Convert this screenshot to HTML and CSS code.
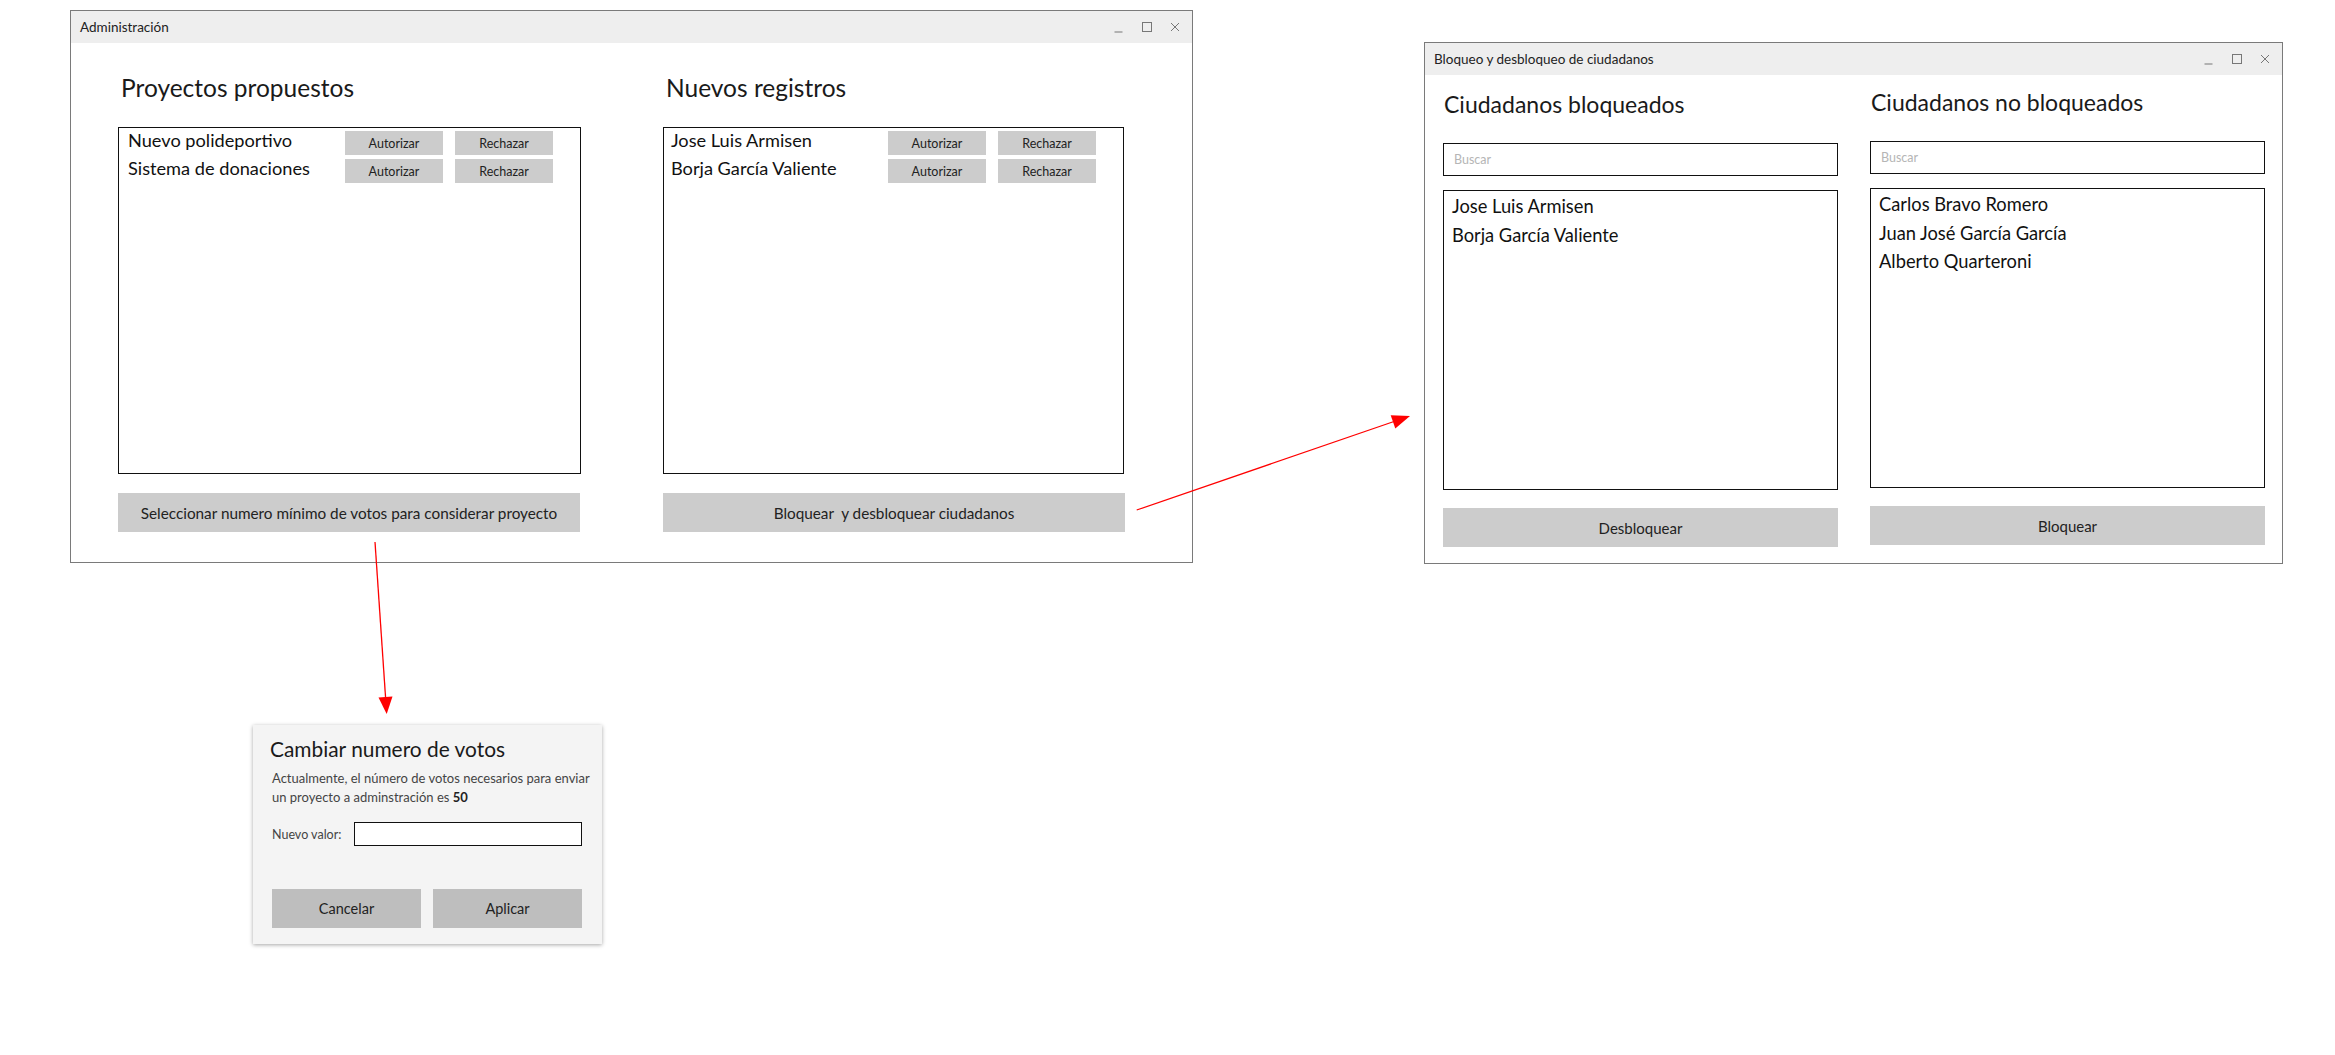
FILE: index.html
```html
<!DOCTYPE html>
<html lang="es">
<head>
<meta charset="utf-8">
<title>Administración</title>
<link rel="stylesheet" href="styles.css">
</head>
<body>
<div class="canvas">

  <section class="window win-admin">
    <header class="titlebar">
      <span class="title">Administración</span>
      <div class="controls">
        <svg class="ctl" viewBox="0 0 12 12"><line x1="1.5" y1="11" x2="9.5" y2="11"/></svg>
        <svg class="ctl" viewBox="0 0 12 12"><rect x="1.5" y="1.5" width="9" height="9"/></svg>
        <svg class="ctl" viewBox="0 0 12 12"><line x1="2" y1="2" x2="10" y2="10"/><line x1="10" y1="2" x2="2" y2="10"/></svg>
      </div>
    </header>
    <div class="admin-body">
      <div class="admin-col">
        <h2 class="heading heading-admin">Proyectos propuestos</h2>
        <div class="listbox admin-list">
          <div class="row"><span class="row-label">Nuevo polideportivo</span><button class="btn-sm">Autorizar</button><button class="btn-sm">Rechazar</button></div>
          <div class="row"><span class="row-label">Sistema de donaciones</span><button class="btn-sm">Autorizar</button><button class="btn-sm">Rechazar</button></div>
        </div>
        <button class="btn-lg">Seleccionar numero mínimo de votos para considerar proyecto</button>
      </div>
      <div class="admin-col admin-col-right">
        <h2 class="heading heading-admin">Nuevos registros</h2>
        <div class="listbox admin-list">
          <div class="row"><span class="row-label">Jose Luis Armisen</span><button class="btn-sm">Autorizar</button><button class="btn-sm">Rechazar</button></div>
          <div class="row"><span class="row-label">Borja García Valiente</span><button class="btn-sm">Autorizar</button><button class="btn-sm">Rechazar</button></div>
        </div>
        <button class="btn-lg">Bloquear&nbsp; y desbloquear ciudadanos</button>
      </div>
    </div>
  </section>

  <section class="window win-block">
    <header class="titlebar">
      <span class="title">Bloqueo y desbloqueo de ciudadanos</span>
      <div class="controls">
        <svg class="ctl" viewBox="0 0 12 12"><line x1="1.5" y1="11" x2="9.5" y2="11"/></svg>
        <svg class="ctl" viewBox="0 0 12 12"><rect x="1.5" y="1.5" width="9" height="9"/></svg>
        <svg class="ctl" viewBox="0 0 12 12"><line x1="2" y1="2" x2="10" y2="10"/><line x1="10" y1="2" x2="2" y2="10"/></svg>
      </div>
    </header>
    <div class="block-body">
      <div class="block-col">
        <h2 class="heading">Ciudadanos bloqueados</h2>
        <div class="search">Buscar</div>
        <div class="listbox block-list">
          <div class="name">Jose Luis Armisen</div>
          <div class="name">Borja García Valiente</div>
        </div>
        <button class="btn-lg btn-block">Desbloquear</button>
      </div>
      <div class="block-col block-col-right">
        <h2 class="heading">Ciudadanos no bloqueados</h2>
        <div class="search">Buscar</div>
        <div class="listbox block-list">
          <div class="name">Carlos Bravo Romero</div>
          <div class="name">Juan José García García</div>
          <div class="name">Alberto Quarteroni</div>
        </div>
        <button class="btn-lg btn-block">Bloquear</button>
      </div>
    </div>
  </section>

  <section class="dialog">
    <h3 class="dialog-title">Cambiar numero de votos</h3>
    <p class="dialog-text">Actualmente, el número de votos necesarios para enviar<br>un proyecto a adminstración es <b>50</b></p>
    <div class="field">
      <span class="field-label">Nuevo valor:</span>
      <div class="field-input"></div>
    </div>
    <div class="dialog-actions">
      <button class="btn-dlg">Cancelar</button>
      <button class="btn-dlg">Aplicar</button>
    </div>
  </section>

  <svg class="arrows" width="2335" height="1055" viewBox="0 0 2335 1055">
    <line x1="375" y1="542" x2="385.6" y2="698" />
    <polygon points="386.7,714 378.5,697.5 392.5,696.5" />
    <line x1="1136.7" y1="510" x2="1394" y2="421.5" />
    <polygon points="1410,416 1395.3,428.5 1390.7,415.3" />
  </svg>
</div>
</body>
</html>
```

FILE: styles.css
```css
* { box-sizing: border-box; }

html, body {
  margin: 0;
  padding: 0;
  background: #ffffff;
}

body {
  font-family: Lato, "Noto Sans", sans-serif;
  color: #1a1a1a;
}

.canvas {
  position: relative;
  width: 2335px;
  height: 1055px;
  overflow: hidden;
}

/* ---------- windows ---------- */
.window {
  position: absolute;
  background: #ffffff;
  border: 1px solid #7a7a7a;
  display: flex;
  flex-direction: column;
}

.win-admin { left: 70px; top: 10px; width: 1123px; height: 553px; }
.win-block { left: 1424px; top: 42px; width: 859px; height: 522px; }

.titlebar {
  height: 32px;
  flex: 0 0 32px;
  background: #eeeeee;
  display: flex;
  align-items: center;
  justify-content: space-between;
  padding: 0 11px 0 9px;
}

.title {
  font-size: 13.5px;
  color: #222;
}

.controls {
  display: flex;
  align-items: center;
  gap: 16px;
}

.ctl {
  width: 12px;
  height: 12px;
  fill: none;
  stroke: #777;
  stroke-width: 1;
}

.heading {
  margin: 0;
  font-weight: 400;
  font-size: 23px;
  line-height: 30px;
  color: #1a1a1a;
}

.heading-admin { font-size: 24.5px; }

.listbox {
  border: 1px solid #111;
  background: #fff;
}

button {
  font-family: inherit;
  border: 0;
  padding: 0;
  margin: 0;
  color: #222;
  cursor: default;
}

.btn-lg {
  display: block;
  background: #cccccc;
  font-size: 15.3px;
  height: 39px;
  width: 100%;
}

/* ---------- admin window ---------- */
.admin-body {
  flex: 1;
  display: flex;
  gap: 82px;
  padding: 30px 0 0 47px;
}

.admin-col { width: 463px; display: flex; flex-direction: column; }
.admin-col-right { width: 461px; }

.admin-col .heading { margin-left: 3px; margin-bottom: 24px; }

.admin-list {
  height: 347px;
  padding: 3px 0 0 9px;
  display: flex;
  flex-direction: column;
  gap: 4px;
}

.admin-col-right .admin-list { padding-left: 7px; }

.admin-col .btn-lg { margin-top: 19px; width: 462px; }

.row {
  display: flex;
  align-items: center;
  height: 24px;
}

.row-label {
  width: 217px;
  font-size: 18.2px;
  line-height: 20px;
  margin-bottom: 6px;
  color: #111;
}

.btn-sm {
  width: 98px;
  height: 24px;
  background: #cccccc;
  font-size: 12.5px;
}

.btn-sm + .btn-sm { margin-left: 12px; }

/* ---------- block window ---------- */
.block-body {
  flex: 1;
  display: flex;
  gap: 32px;
  padding: 14px 0 0 18px;
}

.block-col { width: 395px; display: flex; flex-direction: column; }
.block-col-right { margin-top: -2px; }

.block-col .heading { margin-left: 1px; margin-bottom: 24px; }

.search {
  height: 33px;
  border: 1px solid #111;
  padding-left: 10px;
  font-size: 12.5px;
  line-height: 31px;
  color: #b5b5b5;
}

.block-list {
  margin-top: 14px;
  height: 300px;
  padding: 1px 0 0 8px;
}

.name {
  font-size: 18.3px;
  line-height: 28.5px;
  color: #111;
}

.btn-block { margin-top: 18px; font-size: 15px; }

/* ---------- dialog ---------- */
.dialog {
  position: absolute;
  left: 253px;
  top: 725px;
  width: 349px;
  height: 219px;
  background: #f4f4f4;
  box-shadow: 0 1px 4px rgba(0, 0, 0, 0.35);
  padding: 11px 8px 16px 19px;
  display: flex;
  flex-direction: column;
}

.dialog-title {
  margin: 0 0 0 -2px;
  font-weight: 400;
  font-size: 20.9px;
  line-height: 26px;
  color: #1a1a1a;
}

.dialog-text {
  margin: 7px 0 0 0;
  font-size: 13px;
  line-height: 19px;
  color: #444;
  white-space: nowrap;
}

.dialog-text b { color: #222; font-weight: 700; }

.field {
  margin-top: 15px;
  display: flex;
  align-items: center;
}

.field-label {
  width: 82px;
  font-size: 12.5px;
  color: #444;
}

.field-input {
  width: 228px;
  height: 24px;
  background: #fff;
  border: 1px solid #111;
}

.dialog-actions {
  margin-top: auto;
  display: flex;
  gap: 12px;
}

.btn-dlg {
  width: 149px;
  height: 39px;
  background: #bebebe;
  font-size: 14.5px;
}

/* ---------- arrows ---------- */
.arrows {
  position: absolute;
  left: 0;
  top: 0;
  pointer-events: none;
}

.arrows line { stroke: #ff0000; stroke-width: 1.3; }
.arrows polygon { fill: #ff0000; }
```
